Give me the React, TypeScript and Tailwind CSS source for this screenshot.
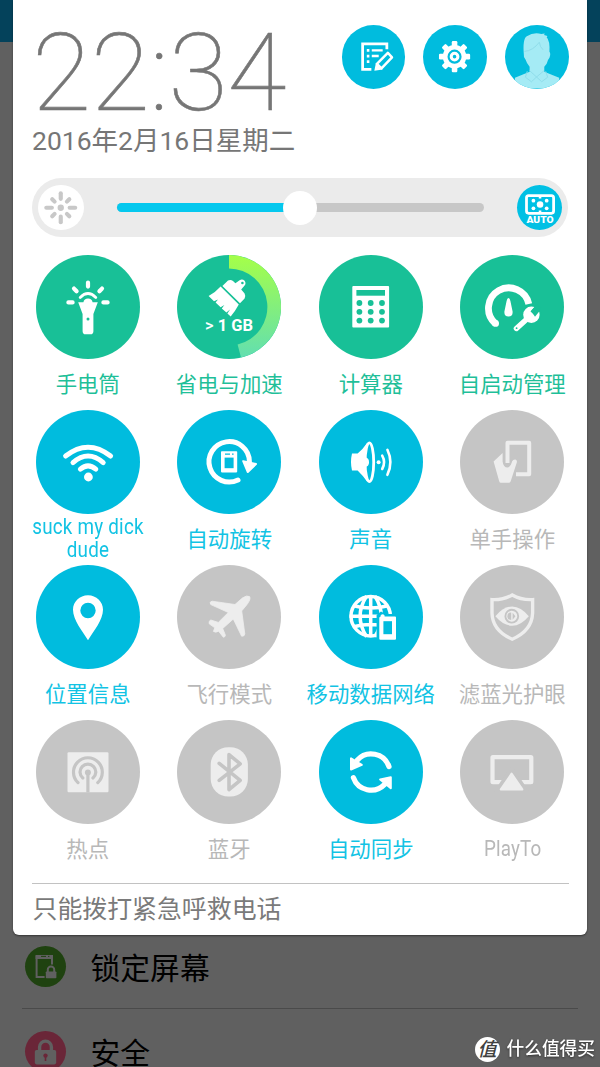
import clsx from "clsx";
import React from "react";

type Tone = "green" | "blue" | "off";

type Tile = {
  label: string;
  tone: Tone;
  icon: React.ReactNode;
  latin?: string;
};

const GREEN = "#18c097";
const BLUE = "#00bcde";
const GREY = "#c5c5c5";
const PALE = "#ededed";

const flashlight = (
  <g stroke="#fff" strokeWidth="4.2" strokeLinecap="round" fill="none">
    <path d="M52 27.6v4M38 33.6l2.6 2.7M66 33.6l-2.6 2.7M32.4 47.4h4.2M71.6 47.4h-4.2" />
    <path d="M44.2 42.4Q52 34.6 59.8 42.4" strokeWidth="2.8" />
    <path
      d="M42.2 47.2H47.4A4.7 4.7 0 0 1 56.6 47.2H61.8L57.4 59V76.2Q57.4 79.3 54.4 79.3H49.6Q46.6 79.3 46.6 76.2V59Z"
      fill="#fff"
      stroke="none"
    />
    <circle cx="52" cy="64" r="1.5" fill={GREEN} stroke="none" />
  </g>
);

const booster = (
  <g>
    <defs>
      <linearGradient id="boost" x1="0" y1="0" x2="0" y2="1">
        <stop offset="0" stopColor="#a5ff48" />
        <stop offset="1" stopColor="#62dfb0" />
      </linearGradient>
    </defs>
    <path d="M52 0A52 52 0 0 1 64 102.6L60.6 89.5A38.5 38.5 0 0 0 52 13.5Z" fill="url(#boost)" />
    <path
      d="M45.4 31L51 25.6Q53.6 24.2 56 26L58.4 28.2L62.6 25.2Q65.4 23.8 67.6 25.8Q69.4 28.4 67.6 30.6L64.2 34.4L67.6 38.4Q69 41 67.6 43.6L63 48.2Z"
      fill="#fff"
    />
    <path
      d="M43.6 31.6L61.8 49.6Q58.4 56 53.7 61.6L50.4 58.4L53 54.6L49.4 57.4L44.8 53.4L47.4 50L43.6 52.2L38.6 47.6L41 44.6L37 46.2L31.6 41Q38.4 37.6 43.6 31.6Z"
      fill="#fff"
    />
    <circle cx="65.4" cy="28" r="1.3" fill={GREEN} />
    <text
      x="28"
      y="76.3"
      fontSize="16.8"
      fontWeight="700"
      fontFamily="Roboto, sans-serif"
      fill="#fff"
      textLength="48"
      lengthAdjust="spacingAndGlyphs"
    >
      <tspan fontWeight="500">&gt;</tspan> 1 GB
    </text>
  </g>
);

const calculator = (
  <g>
    <rect x="33.3" y="31" width="36.8" height="41.6" rx="1" fill="#fff" />
    <rect x="37.4" y="35" width="28.6" height="5.7" fill={GREEN} />
    {[48, 56.8, 65.6].map((cy) =>
      [40.4, 51.7, 63].map((cx) => <circle key={`${cx}-${cy}`} cx={cx} cy={cy} r="2.9" fill={GREEN} />)
    )}
  </g>
);

const autostart = (
  <g fill="none" strokeLinecap="round">
    <path d="M35.4 68.6A20.4 20.4 0 1 1 68.8 49" stroke="#fff" strokeWidth="6.8" strokeLinecap="butt" />
    <circle cx="35.6" cy="68.4" r="3.4" fill="#fff" />
    <path d="M48.5 43Q49.8 43 50.4 46L52.6 56.4Q53 61.6 48.5 61.6Q44 61.6 44.4 56.4L46.6 46Q47.2 43 48.5 43Z" fill="#fff" />
    <circle cx="71.4" cy="59.8" r="10" fill={GREEN} />
    <path d="M56.4 73.4L68 63" stroke="#fff" strokeWidth="5.4" />
    <circle cx="71.4" cy="59.8" r="8.2" fill="#fff" />
    <path d="M72.6 58.4L79 51" stroke={GREEN} strokeWidth="5.6" strokeLinecap="butt" />
    <path d="M71.2 55.8L75 61.8L80.4 55L76.6 50Z" fill={GREEN} />
    <circle cx="56.6" cy="73.2" r="0.9" fill={GREEN} />
  </g>
);

const wifi = (
  <g fill="none" stroke="#fff" strokeWidth="5" strokeLinecap="round">
    <path d="M29.6 46Q52 28.4 74.6 46M37 52.6Q52 39.4 67.2 52.6M44.4 59.2Q52 52.6 59.8 59.2" />
    <circle cx="52.4" cy="67" r="4.4" fill="#fff" stroke="none" />
  </g>
);

const rotate = (
  <g fill="none" stroke="#fff">
    <path d="M61 70A20.2 20.2 0 1 1 72.4 51.6" strokeWidth="5" strokeLinecap="round" />
    <path d="M66.2 51.2L79 54L70.8 62Z" fill="#fff" strokeWidth="2" strokeLinejoin="round" />
    <rect x="44" y="41.2" width="16.2" height="21.2" rx="0.8" fill="#fff" stroke="none" />
    <rect x="47.6" y="47.6" width="9" height="10.6" fill={BLUE} stroke="none" />
    <path d="M48 44.2h5M55 44.2h1.6" stroke={BLUE} strokeWidth="1.2" />
  </g>
);

const sound = (
  <g fill="none" stroke="#fff" strokeLinecap="round">
    <path d="M33 43.6H38.6Q44 39 48.4 32.4V72Q44 65.4 38.6 60.4H33Q31 52 33 43.6Z" fill="#fff" stroke="none" />
    <ellipse cx="50.4" cy="52.2" rx="4.3" ry="19.4" fill={BLUE} strokeWidth="2.8" />
    <path d="M46 47.6Q50 47.6 50 52.2Q50 56.8 46 56.8Z" fill="#fff" stroke="none" />
    <circle cx="59.6" cy="52.2" r="2" fill="#fff" stroke="none" />
    <path d="M63.2 45.6Q67 52.2 63.2 59M68.4 39.8Q74.4 52.2 68.4 64.8" strokeWidth="2.6" />
  </g>
);

const oneHand = (
  <g fill="none" stroke={PALE}>
    <path d="M47.5 53V32.8H69.2V64.2H56" strokeWidth="4" strokeLinejoin="round" />
    <path
      d="M33.6 51.4L42.6 43V51.4Q43.4 57.6 47.8 57.4Q50.6 57 52 51.6Q53 49.2 55.4 49.4Q57.4 50 56.8 52.4L50.6 71.4Q50 72.8 48.8 72.8H41Q39.6 72.8 39.2 71.2Z"
      fill={PALE}
      stroke="none"
    />
    <path d="M43.8 44V52Q44.4 56 47.6 56Q50.6 55.6 51.6 49" stroke={GREY} strokeWidth="1" />
  </g>
);

const pin = (
  <path
    fillRule="evenodd"
    fill="#fff"
    d="M52 30.2C60.4 30.2 67 36.6 67 44.8C67 55 57.6 66.4 52 75.2C46.4 66.4 37 55 37 44.8C37 36.6 43.6 30.2 52 30.2ZM52 37.8A7.7 7.7 0 1 0 52 53.2A7.7 7.7 0 1 0 52 37.8Z"
  />
);

const plane = (
  <path
    d="M72.6 31.6Q74.2 34 69.8 39.8L64.7 45.9L67.8 69Q67.4 71.6 64.6 71.2L56.3 54L45.7 63.5L48.4 70.2Q48.2 72.2 46.3 72.2L41.6 66.2Q38.6 68 36.4 66.4L37.8 62.8L32.2 58.8Q31.4 56 33.8 55L41.3 57.4L51.3 47.5L33.8 39.6Q31.8 37 35 36.2L58 39.5L65.4 33Q70 29.8 72.6 31.6Z"
    fill={PALE}
    stroke={PALE}
    strokeWidth="0.8"
    strokeLinejoin="round"
  />
);

const dataNetwork = (
  <g fill="none" stroke="#fff" strokeWidth="3.5">
    <circle cx="51.7" cy="51.2" r="19.7" />
    <path d="M51.7 30V72M30.5 51.2H73M34.6 40.8Q51.7 45.4 68.8 40.8M34.6 61.8Q51.7 57.2 68.8 61.8" />
    <path d="M47.6 31Q34.6 51.2 47.6 71.8M55.8 31Q68.8 51.2 55.8 71.8" />
    <path d="M57.6 76V50L62 46.6L66.4 49H78V76Z" fill={BLUE} stroke="none" />
    <path d="M61.6 51.6V50.6Q63.6 48 65.6 50.6V51.6H76Q77 51.6 77 52.6V73.8Q77 74.8 76 74.8H61.4Q60.3 74.8 60.3 73.8V52.6Z" fill="#fff" stroke="none" />
    <rect x="64.4" y="56.2" width="8.6" height="13" fill={BLUE} stroke="none" />
  </g>
);

const eyeShield = (
  <g fill="none" stroke={PALE}>
    <path d="M52.2 30Q43 35.2 32 34.6V48Q32.4 65.6 52.2 74.2Q72 65.6 72.6 48V34.6Q61.4 35.2 52.2 30Z" strokeWidth="3.4" />
    <path d="M35.4 51.2Q43.4 41.6 52.2 41.4Q61 41.6 68.8 51.2Q61 60.6 52.2 60.8Q43.4 60.6 35.4 51.2Z" fill={PALE} stroke="none" />
    <circle cx="51.8" cy="51.2" r="6.4" stroke={GREY} strokeWidth="1.9" />
    <path d="M51.2 47.4A3.8 3.8 0 0 0 51.2 55Z" fill={GREY} stroke="none" />
    <path d="M52.6 47.8L55.4 51.2L52.6 54.8Z" fill={GREY} stroke="none" />
  </g>
);

const hotspot = (
  <g fill="none" stroke={GREY} strokeWidth="3.2">
    <rect x="31.5" y="32.2" width="41" height="40" rx="1.2" fill={PALE} stroke="none" />
    <path d="M42 62.6A14.4 14.4 0 1 1 61.8 62.6M46.8 58A7.9 7.9 0 1 1 57 58" strokeLinecap="round" />
    <circle cx="51.9" cy="52.4" r="3" fill={GREY} stroke="none" />
    <path d="M51.9 52V72.4" />
  </g>
);

const bluetooth = (
  <g>
    <rect x="33.7" y="27.2" width="37.2" height="49.4" rx="17.6" fill={PALE} />
    <path
      d="M42.2 43.4L63.2 60.4L52 69.6V34.6L63.2 43.8L42.2 60.4"
      fill="none"
      stroke={GREY}
      strokeWidth="3.6"
      strokeLinecap="round"
      strokeLinejoin="round"
    />
  </g>
);

const sync = (
  <g fill="none" stroke="#fff" strokeWidth="5.2" strokeLinecap="round">
    <path d="M70 46.6A18.8 18.8 0 0 0 38.2 40.2M34.4 57.6A18.8 18.8 0 0 0 65.6 64.4" />
    <path d="M32 38.4V49.6L42.8 44.8Z M71.8 57.2V68.2L61.2 59.4Z" fill="#fff" strokeWidth="2" strokeLinejoin="round" />
  </g>
);

const playTo = (
  <g>
    <rect x="32.5" y="37.2" width="38.8" height="25" rx="0.4" fill="none" stroke={PALE} strokeWidth="4.2" />
    <path d="M51.6 48.4L37.4 69.6H65.8Z" fill={GREY} stroke={GREY} strokeWidth="3.6" />
    <path d="M51.6 53.6L40.8 69.4H62.4Z" fill={PALE} stroke={PALE} strokeWidth="2" strokeLinejoin="round" />
  </g>
);

const tiles: Tile[] = [
  { label: "手电筒", tone: "green", icon: flashlight },
  { label: "省电与加速", tone: "green", icon: booster },
  { label: "计算器", tone: "green", icon: calculator },
  { label: "自启动管理", tone: "green", icon: autostart },
  { label: "suck my dick dude", tone: "blue", icon: wifi, latin: "w-[140px] leading-[23px] mt-[1.5px] tracking-[0.25px]" },
  { label: "自动旋转", tone: "blue", icon: rotate },
  { label: "声音", tone: "blue", icon: sound },
  { label: "单手操作", tone: "off", icon: oneHand },
  { label: "位置信息", tone: "blue", icon: pin },
  { label: "飞行模式", tone: "off", icon: plane },
  { label: "移动数据网络", tone: "blue", icon: dataNetwork },
  { label: "滤蓝光护眼", tone: "off", icon: eyeShield },
  { label: "热点", tone: "off", icon: hotspot },
  { label: "蓝牙", tone: "off", icon: bluetooth },
  { label: "自动同步", tone: "blue", icon: sync },
  { label: "PlayTo", tone: "off", icon: playTo, latin: "leading-[51px] -mt-px tracking-[0.2px]" },
];

const QuickTile = ({ tile }: { tile: Tile }) => {
  const { label, tone, icon, latin } = tile;

  return (
    <div className="flex h-[155px] flex-col items-center">
      <div
        className={clsx(
          "size-[104px] shrink-0 rounded-full",
          tone === "green" && "bg-[#18c097]",
          tone === "blue" && "bg-[#00bcde]",
          tone === "off" && "bg-[#c5c5c5]"
        )}
      >
        <svg viewBox="0 0 104 104" className="size-full">
          {icon}
        </svg>
      </div>
      <div
        className={clsx(
          "text-center text-[21.4px]",
          latin ? ["scale-x-[0.88] font-['Roboto']", latin] : "whitespace-nowrap leading-[51px]",
          tone === "green" && "text-[#1fbf99]",
          tone === "blue" && "text-[#12c3e4]",
          tone === "off" && "text-[#b8b8b8]"
        )}
      >
        {label}
      </div>
    </div>
  );
};

const RoundButton = ({ children }: { children: React.ReactNode }) => (
  <div className="size-[63.5px] overflow-hidden rounded-full bg-[#00bcde]">
    <svg viewBox="0 0 64 64" className="size-full">
      {children}
    </svg>
  </div>
);

const Header = () => (
  <div className="flex h-[178px] justify-between pl-[19px] pr-[18.5px]">
    <div className="text-[#767676]">
      <div className="mt-[25px] h-[97.5px] font-['Roboto'] text-[108px] font-thin leading-[97px] tracking-[-0.3px] [-webkit-text-stroke:0.6px_#767676]">
        22:34
      </div>
      <div className="whitespace-nowrap text-[26.5px] leading-9">2016年2月16日星期二</div>
    </div>
    <div className="mt-[25px] flex gap-[18.2px]">
      <RoundButton>
        <g fill="none" stroke="#fff" strokeWidth="2.8">
          <path d="M45.2 24.4V19H20.8V44.8H29.6" />
          <path d="M25 25.6h2.6M25 31.3h2.6M25 37h2.6" />
          <path d="M30 25.6h11M30 31.3h7" strokeWidth="2.4" />
          <path d="M46.2 28L50.4 32.6L39.8 43.8L35.2 39.2Z" strokeWidth="2.5" strokeLinejoin="round" />
          <path d="M34.2 38L41 44.8L32.6 46Z" fill="#fff" stroke="none" />
        </g>
      </RoundButton>
      <RoundButton>
        {[0, 45, 90, 135].map((deg) => (
          <rect key={deg} x="29" y="16.2" width="5.6" height="31.4" rx="1.2" fill="#fff" transform={`rotate(${deg} 31.8 31.9)`} />
        ))}
        <circle cx="31.8" cy="31.9" r="11.8" fill="#fff" />
        <circle cx="31.8" cy="31.9" r="6" fill="none" stroke={BLUE} strokeWidth="2.2" />
        <circle cx="31.8" cy="31.9" r="1.8" fill={BLUE} />
      </RoundButton>
      <RoundButton>
        <g fill="#a5ebf5">
          <path d="M19 30Q17.6 14 22 11.4Q28.6 7 36.6 9L40 8.6L39.4 10.2L42.8 11.2L42 12.4Q45.4 16 44.8 27Q46.4 29 44.8 33Q43 35 42 39L39.6 42V47L54.6 53.2V64H10V53.2L24.8 47V42Q22 39 20.8 35Q18.4 33 19 30Z" />
          <g fill="none" stroke="#8edbe8" strokeWidth="0.9">
            <path d="M19.6 26.6Q28 26 34.6 17.4Q35 22 38.4 25" />
            <path d="M22.4 46.6L20.6 52.6L26.6 57.2L31.8 52.4L37 57.2L43 52.6L41 46.6M24.8 46L31.8 52.4L39.4 46" />
          </g>
        </g>
      </RoundButton>
    </div>
  </div>
);

const BrightnessBar = () => (
  <div className="mx-[19px] flex h-[59px] items-center rounded-full bg-[#ebebeb] px-1.5">
    <svg viewBox="0 0 46 46" className="size-[45.5px] rounded-full bg-white">
      <g stroke="#c8c8c8" strokeWidth="4.2" strokeLinecap="round">
        {[0, 90, 180, 270].map((deg) => (
          <path key={deg} d="M23 8.4V14" transform={`rotate(${deg} 23 23)`} />
        ))}
        {[45, 135, 225, 315].map((deg) => (
          <path key={deg} d="M23 10.8V14.2" transform={`rotate(${deg} 23 23)`} />
        ))}
      </g>
      <circle cx="23" cy="23" r="3.2" fill="#c8c8c8" />
    </svg>
    <div className="ml-[33px] flex h-[9px] flex-1 items-center rounded-full bg-[#c7c7c7]">
      <div className="h-full w-[183px] rounded-l-full bg-[#05c8ee]" />
      <div className="-ml-[17px] size-[34px] shrink-0 rounded-full bg-white" />
    </div>
    <svg viewBox="0 0 46 46" className="ml-[33px] size-[45.5px] rounded-full bg-[#00c0e4]">
      <rect x="9.6" y="10.8" width="27.4" height="17.8" rx="2.2" fill="none" stroke="#fff" strokeWidth="2.8" />
      <g fill="#fff">
        <circle cx="23.3" cy="19.7" r="3.3" />
        <circle cx="16.6" cy="15.8" r="1.9" />
        <circle cx="30" cy="15.8" r="1.9" />
        <circle cx="16.6" cy="23.6" r="1.9" />
        <circle cx="30" cy="23.6" r="1.9" />
        <path d="M22 11.6h2.6v2h-2.6zM22 25.8h2.6v2h-2.6z" />
        <text
          x="9.6"
          y="38.4"
          fontSize="9"
          fontWeight="900"
          fontFamily="Roboto, sans-serif"
          textLength="27.4"
          lengthAdjust="spacingAndGlyphs"
        >
          AUTO
        </text>
      </g>
    </svg>
  </div>
);

const SettingsRow = ({ label, icon, color }: { label: string; icon: React.ReactNode; color: string }) => (
  <div className="flex h-[84px] items-center">
    <svg viewBox="0 0 41 41" className={clsx("ml-[2.5px] size-[41px] shrink-0 rounded-full", color)}>
      {icon}
    </svg>
    <span className="ml-[25px] pt-1.5 text-[29.8px] leading-none text-black">{label}</span>
  </div>
);

const App = () => {
  return (
    <div className="relative h-[1067px] w-[600px] overflow-hidden bg-[#606060] font-['Roboto','Noto_Sans_CJK_SC',sans-serif]">
      {/* Dimmed settings screen behind the shade */}
      <div className="h-[42px] bg-[#04425b]" />
      <div className="mx-[22px] mt-[882px] border-b-[1.5px] border-[#4a4a4a]">
        <SettingsRow
          label="锁定屏幕"
          color="bg-[#1f4210]"
          icon={
            <g fill="none" stroke="#606060" strokeWidth="2">
              <path d="M27 18.6V10.4H11.6V31H19.6" />
              <path d="M10.6 11h17.4" strokeWidth="4" />
              <path d="M16 10.4h5M23 10.4h1.4" stroke="#1f4210" strokeWidth="1" />
              <path d="M22.8 26V23.6a3.2 3.2 0 0 1 6.4 0V26" />
              <rect x="20.8" y="25.4" width="10.6" height="6.8" rx="0.8" fill="#606060" stroke="none" />
            </g>
          }
        />
      </div>
      <div className="mx-[22px] border-b border-transparent">
        <SettingsRow
          label="安全"
          color="bg-[#6a2638]"
          icon={
            <g fill="none" stroke="#606060">
              <path d="M14.6 20V16a5.9 5.9 0 0 1 11.8 0V20" strokeWidth="3.4" />
              <rect x="9.8" y="19" width="21.4" height="14.4" rx="1.8" fill="#606060" stroke="none" />
              <circle cx="20.5" cy="24.6" r="2.2" fill="#6a2638" stroke="none" />
              <path d="M20.5 25v5" stroke="#6a2638" strokeWidth="1.6" />
            </g>
          }
        />
      </div>

      {/* Quick settings shade */}
      <div className="absolute left-[13px] top-0 h-[935px] w-[574px] rounded-b-[6px] bg-white shadow-[0_1px_2px_rgba(0,0,0,0.45)]">
        <Header />
        <BrightnessBar />
        <div className="mt-[17.6px] grid grid-cols-4 px-1">
          {tiles.map((tile) => (
            <QuickTile key={tile.label} tile={tile} />
          ))}
        </div>
        <div className="mx-[18.5px] mt-[8.8px] border-t-[1.5px] border-[#c2c2c2] pl-px text-[24.9px] leading-[52px] text-[#7a7a7a]">
          只能拨打紧急呼救电话
        </div>
      </div>

      {/* Watermark */}
      <div className="absolute bottom-[5px] right-[5px] flex items-center gap-[7px] text-white">
        <div className="flex size-[25px] items-center justify-center rounded-full bg-white text-[19px] font-medium italic leading-none text-[#404040]">
          值
        </div>
        <span className="text-[17.7px] font-medium leading-[26px] drop-shadow-[0_1px_1px_rgba(0,0,0,0.5)]">什么值得买</span>
      </div>
    </div>
  );
};

export default App;
